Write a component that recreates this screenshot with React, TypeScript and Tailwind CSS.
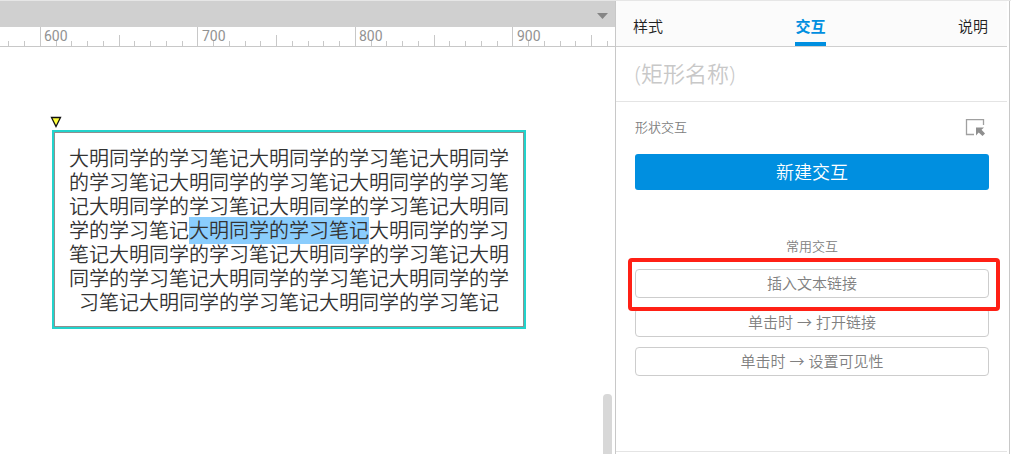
import React from "react";

const PHRASE = "大明同学的学习笔记";

const TABS = [
  { id: "style", label: "样式", active: false },
  { id: "interaction", label: "交互", active: true },
  { id: "notes", label: "说明", active: false },
];

const TICK_STEP = 15.75;

function Ruler() {
  // one tick per 10 units, counted from the 600 mark
  const ticks = Array.from({ length: 39 }, (_, i) => i - 2);

  return (
    <svg className="block h-[20px] w-full" aria-label="ruler">
      {ticks.map((n) => {
        const major = n % 10 === 0;
        const top = major ? 0 : n % 5 === 0 ? 8 : 14;
        return (
          <rect
            key={n}
            x={Math.floor(40.4 + n * TICK_STEP)}
            y={top}
            width={1}
            height={20 - top}
            fill="#c8c8c8"
          />
        );
      })}
      {[600, 700, 800, 900].map((value, i) => (
        <text
          key={value}
          x={Math.floor(44.5 + i * TICK_STEP * 10)}
          y={14}
          fill="#929292"
          className="font-[Roboto,sans-serif] text-[14px] font-normal"
        >
          {value}
        </text>
      ))}
      <rect x={0} y={19} width="100%" height={1} fill="#c8c8c8" />
    </svg>
  );
}

function Shape() {
  return (
    <div className="absolute left-[52px] top-[83px] w-[474px] border-2 border-[#22d3cc]">
      <svg
        className="absolute -left-[4px] -top-[16px] h-[12px] w-[12px]"
        viewBox="0 0 12 12"
      >
        <path d="M1.5 1.5h9L6 10.5z" fill="#ffff3c" stroke="#111" strokeWidth="1.3" />
      </svg>
      <p className="border border-[#8f8f8f] px-[9px] pt-[14px] pb-[11px] text-center text-[20px] leading-[24px] text-[#333]">
        {PHRASE.repeat(8)}
        <mark className="bg-[#8acdfd] text-[#333]">{PHRASE}</mark>
        {PHRASE.repeat(8)}
      </p>
    </div>
  );
}

function Canvas() {
  return (
    <section className="flex min-w-0 flex-1 flex-col">
      <div className="flex h-[26px] items-center justify-end bg-[#d0d0d0] pt-[3px] pr-[7px]">
        <button aria-label="页面菜单" className="block">
          <svg className="block h-[6px] w-[11px]" viewBox="0 0 11 6">
            <path d="M0 0h11L5.5 6z" fill="#858585" />
          </svg>
        </button>
      </div>
      <Ruler />
      <div className="relative flex flex-1 justify-end overflow-hidden pr-[3px]">
        <Shape />
        <div className="h-[60px] w-[9px] self-end rounded-t-[4px] bg-[#d8d8d8]" />
      </div>
    </section>
  );
}

function ActionButton({ children }: { children: React.ReactNode }) {
  return (
    <button className="block h-[29px] w-full rounded-[4px] border border-[#cdcdcd] bg-white text-center text-[15px] leading-[27px] text-[#808080]">
      {children}
    </button>
  );
}

function Inspector() {
  return (
    <aside className="flex w-[395px] shrink-0 flex-col border-x border-[#c8c8c8] pr-[2px]">
      <nav className="flex h-[46px] items-end justify-between border-b border-[#cfcfcf] bg-[#fbfbfb] pr-[19px] pl-[17px]">
        {TABS.map((tab) => (
          <button
            key={tab.id}
            className={
              tab.active
                ? "h-[34px] border-b-4 border-[#008fe0] pb-[2px] text-[15px] font-bold text-[#008fe0]"
                : "h-[34px] border-b-4 border-transparent pb-[2px] text-[15px] text-[#222]"
            }
          >
            {tab.label}
          </button>
        ))}
      </nav>

      <div className="flex h-[55px] items-center border-b border-[#e4e4e4] px-[19px] pb-[2px]">
        <input
          aria-label="矩形名称"
          placeholder="(矩形名称)"
          className="w-full text-[22px] outline-none placeholder:text-[#c8c8c8]"
        />
      </div>

      <div className="pr-[18px] pl-[19px]">
        <div className="flex h-[52px] items-center justify-between pr-[4px]">
          <h2 className="text-[13px] font-[350] text-[#808080]">形状交互</h2>
          <button aria-label="选择目标">
            <svg className="block h-[18px] w-[20px]" viewBox="0 0 20 18" fill="none">
              <path d="M9 15.5H1.5V.5H18.5V6" stroke="#a0a0a0" strokeWidth="1.3" />
              <path d="M11 8.500h8l-2.500 2.300 3.500 3.700-2.500 2.500-3.800-3.500-2.700 3z" fill="#8f8f8f" />
            </svg>
          </button>
        </div>
        <button className="block h-[36px] w-full rounded-[3px] bg-[#008fe0] text-center text-[18px] leading-[36px] text-white">
          新建交互
        </button>

        <h3 className="mt-[46px] text-center text-[13px] font-[350] leading-[20px] text-[#808080]">
          常用交互
        </h3>
        <div className="mt-[13px] flex flex-col gap-[10px]">
          <div className="relative">
            <ActionButton>插入文本链接</ActionButton>
            <div className="pointer-events-none absolute -top-[11px] -right-[11px] -bottom-[13px] -left-[7px] z-10 rounded-[4px] border-4 border-[#ff2015]" />
          </div>
          <ActionButton>单击时 → 打开链接</ActionButton>
          <ActionButton>单击时 → 设置可见性</ActionButton>
        </div>
      </div>

      <div className="mt-auto h-[3px] border-t border-[#e4e4e4]" />
    </aside>
  );
}

export default function App() {
  return (
    <main className="flex min-h-screen border-t border-[#e6e6e6] bg-white pr-px font-['Open_Sans','Noto_Sans_CJK_SC',sans-serif] font-[350]">
      <Canvas />
      <Inspector />
    </main>
  );
}
